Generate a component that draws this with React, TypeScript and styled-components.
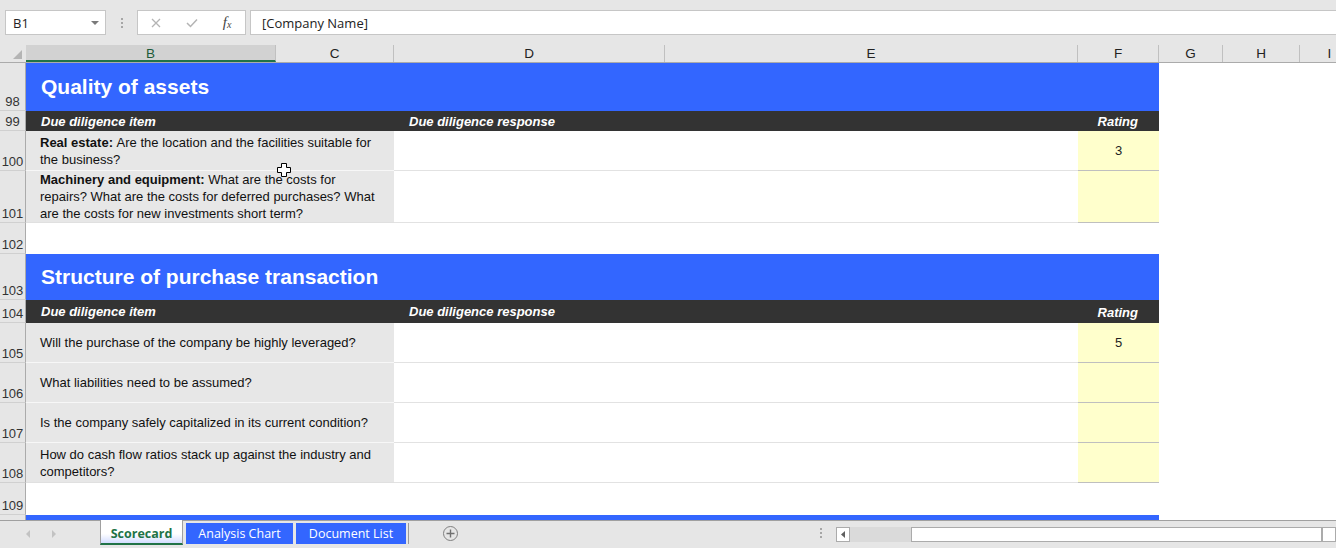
import React from "react";
import styled, { createGlobalStyle } from "styled-components";

const GlobalStyle = createGlobalStyle`
  html, body {
    margin: 0;
    padding: 0;
    background: #ffffff;
  }
  body {
    font-family: "Liberation Sans", Arial, sans-serif;
  }
`;

// column widths in px (B+C = item, D+E = response, F = rating)
const ITEM_W = 368;
const RESP_W = 684;
const RATE_W = 81;

const columns = [
  { label: "B", w: 250, selected: true },
  { label: "C", w: 118 },
  { label: "D", w: 271 },
  { label: "E", w: 413 },
  { label: "F", w: 81 },
  { label: "G", w: 64 },
  { label: "H", w: 77 },
  { label: "I", w: 60 },
];

type SheetRow =
  | { kind: "title"; n: number; h: number; text: string }
  | { kind: "head"; n: number; h: number }
  | { kind: "item"; n: number; h: number; lead?: string; text: string; rating?: string; last?: boolean }
  | { kind: "blank"; n: number; h: number };

const rows: SheetRow[] = [
  { kind: "title", n: 98, h: 48, text: "Quality of assets" },
  { kind: "head", n: 99, h: 20 },
  {
    kind: "item",
    n: 100,
    h: 40,
    lead: "Real estate:",
    text: "Are the location and the facilities suitable for the business?",
    rating: "3",
  },
  {
    kind: "item",
    n: 101,
    h: 52,
    lead: "Machinery and equipment:",
    text: "What are the costs for repairs? What are the costs for deferred purchases? What are the costs for new investments short term?",
    last: true,
  },
  { kind: "blank", n: 102, h: 31 },
  { kind: "title", n: 103, h: 46, text: "Structure of purchase transaction" },
  { kind: "head", n: 104, h: 23 },
  { kind: "item", n: 105, h: 40, text: "Will the purchase of the company be highly leveraged?", rating: "5" },
  { kind: "item", n: 106, h: 40, text: "What liabilities need to be assumed?" },
  { kind: "item", n: 107, h: 40, text: "Is the company safely capitalized in its current condition?" },
  {
    kind: "item",
    n: 108,
    h: 40,
    text: "How do cash flow ratios stack up against the industry and competitors?",
    last: true,
  },
  { kind: "blank", n: 109, h: 32 },
  { kind: "title", n: 110, h: 48, text: "" },
];

const Window = styled.div`
  position: relative;
  width: 1336px;
  height: 548px;
  display: flex;
  flex-direction: column;
  overflow: hidden;
  background: #ffffff;
`;

/* ---------- formula bar ---------- */

const FormulaBar = styled.div`
  height: 45px;
  flex-shrink: 0;
  box-sizing: border-box;
  padding: 10px 0 0 5px;
  background: #e6e6e6;
  display: flex;
  align-items: flex-start;
  font-family: "Open Sans", "Noto Sans", sans-serif;
  font-size: 13px;
  color: #222;
`;

const NameBox = styled.div`
  width: 101px;
  height: 25px;
  box-sizing: border-box;
  background: #fff;
  border: 1px solid #c6c6c6;
  display: flex;
  align-items: center;
  justify-content: space-between;
  padding: 0 6px 0 7px;
`;

const DropArrow = styled.span`
  width: 0;
  height: 0;
  border-left: 4px solid transparent;
  border-right: 4px solid transparent;
  border-top: 4px solid #7a7a7a;
`;

const Grip = styled.div`
  width: 31px;
  height: 25px;
  display: flex;
  flex-direction: column;
  align-items: center;
  justify-content: center;
  gap: 2px;
  span {
    width: 2px;
    height: 2px;
    background: #a6a6a6;
  }
`;

const FxBox = styled.div`
  width: 109px;
  height: 25px;
  box-sizing: border-box;
  background: #fff;
  border: 1px solid #c6c6c6;
  display: flex;
  align-items: center;
`;

const FxSlot = styled.div`
  width: 36px;
  height: 100%;
  display: flex;
  align-items: center;
  justify-content: center;
`;

const FxText = styled.span`
  font-family: "Liberation Serif", serif;
  font-style: italic;
  font-size: 15px;
  color: #444;
  sub {
    font-size: 10px;
    vertical-align: -1px;
  }
`;

const FormulaInput = styled.div`
  flex: 1;
  height: 25px;
  margin-left: 4px;
  box-sizing: border-box;
  background: #fff;
  border: 1px solid #c6c6c6;
  border-right: none;
  display: flex;
  align-items: center;
  padding-left: 11px;
`;

/* ---------- column headers ---------- */

const ColHeadRow = styled.div`
  height: 17px;
  flex-shrink: 0;
  display: flex;
  background: #e6e6e6;
  border-bottom: 1px solid #ababab;
`;

const Corner = styled.div`
  width: 26px;
  flex-shrink: 0;
  height: 17px;
  display: flex;
  align-items: flex-end;
  justify-content: flex-end;
  padding: 0 4px 3px 0;
  box-sizing: border-box;
`;

const CornerTri = styled.span`
  width: 0;
  height: 0;
  border-left: 9px solid transparent;
  border-bottom: 9px solid #b4b4b4;
`;

const ColHead = styled.div<{ $w: number; $selected?: boolean }>`
  width: ${(p) => p.$w}px;
  flex-shrink: 0;
  height: 17px;
  box-sizing: border-box;
  display: flex;
  align-items: center;
  justify-content: center;
  font-size: 13.5px;
  color: ${(p) => (p.$selected ? "#1d5b3a" : "#222")};
  background: ${(p) => (p.$selected ? "#d2d2d2" : "transparent")};
  border-bottom: ${(p) => (p.$selected ? "2px solid #217346" : "none")};
  border-right: 1px solid #c0c0c0;
  padding-top: ${(p) => (p.$selected ? "2px" : "0")};
`;

/* ---------- sheet ---------- */

const Sheet = styled.div`
  flex: 1;
  overflow: hidden;
  display: flex;
  flex-direction: column;
`;

const Row = styled.div<{ $h: number }>`
  height: ${(p) => p.$h}px;
  flex-shrink: 0;
  display: flex;
`;

const RowNum = styled.div`
  width: 26px;
  flex-shrink: 0;
  box-sizing: border-box;
  background: #e6e6e6;
  border-right: 1px solid #ababab;
  border-bottom: 1px solid #d0d0d0;
  display: flex;
  align-items: flex-end;
  justify-content: center;
  padding-bottom: 1px;
  font-size: 13px;
  line-height: 14px;
  color: #333;
`;

const TitleBand = styled.div`
  width: ${ITEM_W + RESP_W + RATE_W}px;
  background: #3366ff;
  color: #fff;
  font-weight: bold;
  font-size: 21px;
  display: flex;
  align-items: center;
  padding-left: 15px;
  box-sizing: border-box;
`;

const HeadBand = styled.div`
  display: flex;
  background: #333333;
  color: #fff;
  font-weight: bold;
  font-style: italic;
  font-size: 13px;
`;

const HeadCell = styled.div<{ $w: number; $align?: "left" | "right" }>`
  width: ${(p) => p.$w}px;
  box-sizing: border-box;
  display: flex;
  align-items: center;
  justify-content: ${(p) => (p.$align === "right" ? "flex-end" : "flex-start")};
  padding: ${(p) => (p.$align === "right" ? "1px 21px 0 0" : "0 0 0 15px")};
`;

const ItemCell = styled.div<{ $last?: boolean }>`
  width: ${ITEM_W}px;
  box-sizing: border-box;
  background: #e7e7e7;
  border-bottom: 1px solid ${(p) => (p.$last ? "#e0e0e0" : "#f7f7f7")};
  display: flex;
  align-items: center;
  padding: 0 14px 0 14px;
  font-size: 13px;
  line-height: 17px;
  color: #111;
`;

const Lead = styled.strong`
  font-weight: bold;
`;

const ResponseCell = styled.div`
  width: ${RESP_W}px;
  box-sizing: border-box;
  background: #fff;
  border-bottom: 1px solid #e2e2e2;
`;

const RatingCell = styled.div`
  width: ${RATE_W}px;
  box-sizing: border-box;
  background: #ffffcc;
  border-bottom: 1px solid #bfbfbf;
  display: flex;
  align-items: center;
  justify-content: center;
  font-size: 13px;
  color: #222;
`;

const Cursor = styled.svg`
  position: absolute;
  left: 276px;
  top: 162px;
`;

/* ---------- sheet tabs / status ---------- */

const TabBar = styled.div`
  height: 28px;
  flex-shrink: 0;
  box-sizing: border-box;
  background: #e6e6e6;
  border-top: 1px solid #a0a0a0;
  display: flex;
  align-items: flex-start;
  font-family: "Open Sans", "Noto Sans", sans-serif;
  font-size: 12.5px;
`;

const NavArea = styled.div`
  width: 100px;
  flex-shrink: 0;
  height: 24px;
  display: flex;
  align-items: center;
  padding: 2px 0 0 26px;
  gap: 22px;
  box-sizing: border-box;
`;

const NavArrow = styled.span<{ $dir: "left" | "right" }>`
  width: 0;
  height: 0;
  border-top: 4px solid transparent;
  border-bottom: 4px solid transparent;
  ${(p) =>
    p.$dir === "left"
      ? "border-right: 4px solid #c2c2c2;"
      : "border-left: 4px solid #c2c2c2;"}
`;

const Tab = styled.div<{ $active?: boolean; $w: number }>`
  width: ${(p) => p.$w}px;
  flex-shrink: 0;
  box-sizing: border-box;
  display: flex;
  align-items: center;
  justify-content: center;
  ${(p) =>
    p.$active
      ? `
    height: 25px;
    margin-top: -1px;
    padding-top: 3px;
    background: linear-gradient(to bottom, #ffffff 0%, #ffffff 60%, #d3ddff 100%);
    border-left: 1px solid #a0a0a0;
    border-right: 1px solid #a0a0a0;
    border-bottom: 2px solid #217346;
    color: #217346;
    font-weight: bold;
  `
      : `
    height: 21px;
    margin: 2px 0 0 3px;
    background: #3366ff;
    color: #ffffff;
  `}
`;

const TabSep = styled.div`
  width: 1px;
  height: 21px;
  margin: 2px 0 0 2px;
  background: #9a9a9a;
`;

const AddSheet = styled.div`
  width: 15px;
  height: 15px;
  margin: 5px 0 0 34px;
  box-sizing: border-box;
  border: 1px solid #808080;
  border-radius: 50%;
  display: flex;
  align-items: center;
  justify-content: center;
`;

const Spacer = styled.div`
  flex: 1;
`;

const Dots = styled.div`
  width: 16px;
  margin-right: 7px;
  height: 24px;
  display: flex;
  flex-direction: column;
  align-items: center;
  justify-content: center;
  gap: 2px;
  span {
    width: 2px;
    height: 2px;
    background: #a6a6a6;
  }
`;

const HScroll = styled.div`
  width: 500px;
  flex-shrink: 0;
  height: 15px;
  margin-top: 6px;
  display: flex;
`;

const ScrollBtn = styled.div`
  width: 14px;
  height: 15px;
  box-sizing: border-box;
  border: 1px solid #ababab;
  background: #fff;
  display: flex;
  align-items: center;
  justify-content: center;
`;

const Track = styled.div<{ $w: number }>`
  width: ${(p) => p.$w}px;
  height: 15px;
  background: #dadada;
`;

const Thumb = styled.div`
  flex: 1;
  height: 15px;
  box-sizing: border-box;
  border: 1px solid #ababab;
  background: #fff;
`;

function App() {
  return (
    <>
      <GlobalStyle />
      <Window>
        <FormulaBar>
          <NameBox>
            <span>B1</span>
            <DropArrow />
          </NameBox>
          <Grip>
            <span />
            <span />
            <span />
          </Grip>
          <FxBox>
            <FxSlot>
              <svg width="10" height="10" viewBox="0 0 10 10">
                <path d="M1 1 L9 9 M9 1 L1 9" stroke="#b4b4b4" strokeWidth="1.3" />
              </svg>
            </FxSlot>
            <FxSlot>
              <svg width="12" height="10" viewBox="0 0 12 10">
                <path d="M1 5 L4.5 8.5 L11 1.5" stroke="#b4b4b4" strokeWidth="1.5" fill="none" />
              </svg>
            </FxSlot>
            <FxSlot>
              <FxText>
                f<sub>x</sub>
              </FxText>
            </FxSlot>
          </FxBox>
          <FormulaInput>[Company Name]</FormulaInput>
        </FormulaBar>

        <ColHeadRow>
          <Corner>
            <CornerTri />
          </Corner>
          {columns.map((c) => (
            <ColHead key={c.label} $w={c.w} $selected={c.selected}>
              {c.label}
            </ColHead>
          ))}
        </ColHeadRow>

        <Sheet>
          {rows.map((r) => (
            <Row key={r.n} $h={r.h}>
              <RowNum>{r.n}</RowNum>
              {r.kind === "title" && <TitleBand>{r.text}</TitleBand>}
              {r.kind === "head" && (
                <HeadBand>
                  <HeadCell $w={ITEM_W}>Due diligence item</HeadCell>
                  <HeadCell $w={RESP_W}>Due diligence response</HeadCell>
                  <HeadCell $w={RATE_W} $align="right">
                    Rating
                  </HeadCell>
                </HeadBand>
              )}
              {r.kind === "item" && (
                <>
                  <ItemCell $last={r.last}>
                    <p style={{ margin: 0 }}>
                      {r.lead ? <Lead>{r.lead} </Lead> : null}
                      {r.text}
                    </p>
                  </ItemCell>
                  <ResponseCell />
                  <RatingCell>{r.rating}</RatingCell>
                </>
              )}
            </Row>
          ))}
        </Sheet>

        <TabBar>
          <NavArea>
            <NavArrow $dir="left" />
            <NavArrow $dir="right" />
          </NavArea>
          <Tab $active $w={83}>
            Scorecard
          </Tab>
          <Tab $w={107}>Analysis Chart</Tab>
          <Tab $w={110}>Document List</Tab>
          <TabSep />
          <AddSheet>
            <svg width="9" height="9" viewBox="0 0 9 9">
              <path d="M4.5 0.5 V8.5 M0.5 4.5 H8.5" stroke="#707070" strokeWidth="1.4" />
            </svg>
          </AddSheet>
          <Spacer />
          <Dots>
            <span />
            <span />
            <span />
          </Dots>
          <HScroll>
            <ScrollBtn>
              <svg width="5" height="7" viewBox="0 0 5 7">
                <path d="M4 0 L0 3.5 L4 7 Z" fill="#606060" />
              </svg>
            </ScrollBtn>
            <Track $w={61} />
            <Thumb />
            <ScrollBtn />
          </HScroll>
        </TabBar>

        <Cursor width="16" height="16" viewBox="0 0 16 16">
          <path
            d="M5.5 1.5 H10.5 V5.5 H14.5 V10.5 H10.5 V14.5 H5.5 V10.5 H1.5 V5.5 H5.5 Z"
            fill="#ffffff"
            stroke="#000000"
            strokeWidth="1"
          />
        </Cursor>
      </Window>
    </>
  );
}

export default App;
